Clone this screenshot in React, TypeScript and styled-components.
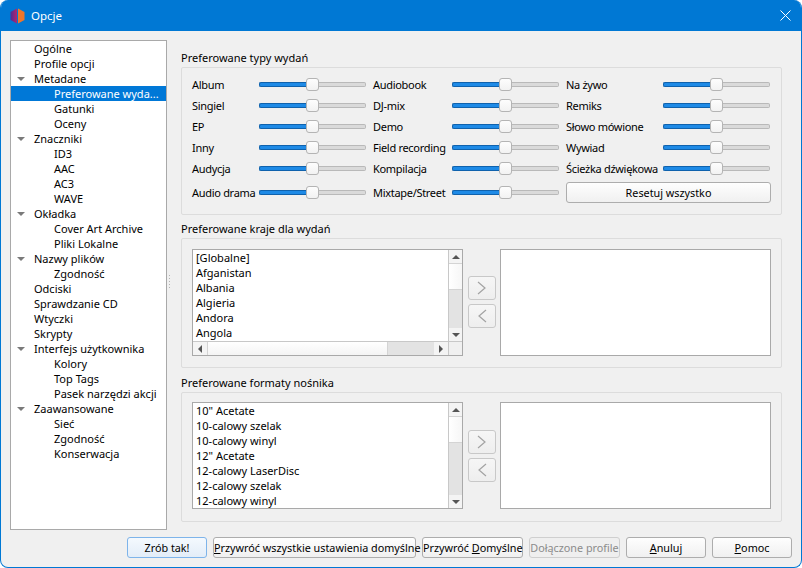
import React from 'react'
import styled, { createGlobalStyle } from 'styled-components'

const Global = createGlobalStyle`
  html, body { margin: 0; padding: 0; background: #fff; }
  body { font-family: "Noto Sans", "Open Sans", sans-serif; font-size: 11px; color: #000; }
  * { box-sizing: border-box; }
`

const Win = styled.div`
  width: 802px; height: 568px; display: flex; flex-direction: column;
  border: 1px solid #0078d4; border-top: 0; border-radius: 8px;
  background: #f0f0f0; overflow: hidden;
`
const TitleBar = styled.div`
  height: 31px; flex: none; background: #0078d4; color: #fff; margin: 0 -1px;
  display: flex; align-items: center; padding: 0 11px 0 10px; gap: 6px; font-size: 11.5px;
`
const TitleText = styled.span`flex: 1;`
const Body = styled.div`
  flex: 1; display: flex; flex-direction: column; padding: 9px; min-height: 0;
`
const Columns = styled.div`display: flex; height: 490px; flex: none;`

const Tree = styled.div`
  width: 157px; flex: none; background: #fff; border: 1px solid #a9a9a9;
  display: flex; flex-direction: column;
`
const TreeRow = styled.div<{ $selected?: boolean }>`
  height: 15px; flex: none; display: flex; align-items: center; line-height: 15px;
  white-space: nowrap; overflow: hidden;
  background: ${p => (p.$selected ? '#0078d7' : 'transparent')};
  color: ${p => (p.$selected ? '#fff' : '#000')};
`
const ArrowSlot = styled.span`
  width: 23px; flex: none; display: flex; padding-left: 6px;
`
const Caret = styled.span`
  width: 0; height: 0; border-left: 4px solid transparent; border-right: 4px solid transparent;
  border-top: 4px solid #7a7a7a;
`
const TreeLabel = styled.span<{ $depth: number }>`
  margin-left: ${p => p.$depth * 20}px;
`

const Splitter = styled.div`
  width: 14px; flex: none; display: flex; flex-direction: column; align-items: flex-start;
  justify-content: center; gap: 2px; padding-left: 2px; padding-bottom: 8px;
`
const SplitDot = styled.span`width: 1px; height: 1px; background: #b4b4b4;`

const Right = styled.div`width: 601px; flex: none; display: flex; flex-direction: column;`
const SectionTitle = styled.div<{ $top: number }>`
  margin-top: ${p => p.$top}px; height: 16px; line-height: 16px; margin-bottom: 1px;
`
const GroupBox = styled.div<{ $height: number; $top: number }>`
  height: ${p => p.$height}px; flex: none; border: 1px solid #dcdcdc; border-radius: 2px;
  padding: ${p => p.$top}px 10px 0 10px;
`
const SliderGrid = styled.div`
  display: grid; grid-template-columns: 67px 107px 86px 107px 104px 107px;
  grid-template-rows: repeat(5, 21px) 27px;
`
const SliderLabel = styled.div<{ $gap?: boolean }>`
  display: flex; align-items: center; white-space: nowrap; letter-spacing: -0.3px;
  margin-left: ${p => (p.$gap ? '7px' : '0')};
`
const SliderCell = styled.div`
  display: flex; align-items: center; padding-bottom: 1px;
`
const Fill = styled.div`
  flex: 1; height: 5px; background: #1e8ae6; border: 1px solid #0f62ad; border-right: 0;
  border-radius: 2px 0 0 2px;
`
const Rest = styled.div`
  flex: 1; height: 5px; background: #dadada; border: 1px solid #b9b9b9; border-left: 0;
  border-radius: 0 2px 2px 0;
`
const Thumb = styled.div`
  width: 13px; height: 13px; flex: none; background: linear-gradient(#fdfdfd, #f2f2f2);
  border: 1px solid #b4b4b4; border-radius: 3px;
`
const Btn = styled.button<{ $width?: number; $default?: boolean }>`
  ${p => (p.$width ? `width: ${p.$width}px;` : '')}
  height: 21px; padding: 0; flex: none; font: inherit; font-size: 10.8px; color: #000; white-space: nowrap;
  border: 1px solid ${p => (p.$default ? '#7eb4ea' : '#adadad')}; border-radius: 3px;
  background: ${p => (p.$default
    ? 'linear-gradient(#f4f9fe, #e3edf8)'
    : 'linear-gradient(#fefefe, #f0f0f0)')};
  &:disabled { color: #8b8b8b; border-color: #cfcfcf; background: #efefef; }
`
const ResetCell = styled.div`
  grid-column: 5 / span 2; display: flex; align-items: center; margin-left: 7px;
`
const ResetBtn = styled(Btn)`width: 205px;`

const Picker = styled.div`display: flex; align-items: stretch; height: 107px;`
const ListFrame = styled.div<{ $hscroll?: boolean }>`
  width: 271px; flex: none; background: #fff; border: 1px solid #a9a9a9;
  display: grid; grid-template-columns: 1fr 14px;
  grid-template-rows: ${p => (p.$hscroll ? '1fr 14px' : '1fr')};
`
const ListItems = styled.div`padding: 0 0 0 3px; overflow: hidden; display: flex; flex-direction: column;`
const ListItem = styled.div`height: 15px; line-height: 15px; flex: none; white-space: nowrap;`
const VBar = styled.div`
  display: flex; flex-direction: column; border-left: 1px solid #c8c8c8;
`
const HBar = styled.div`
  display: flex; border-top: 1px solid #c8c8c8;
`
const Corner = styled.div`
  border-left: 1px solid #c8c8c8; border-top: 1px solid #c8c8c8; background: #f0f0f0;
`
const BarEnd = styled.div<{ $v?: boolean }>`
  flex: none; ${p => (p.$v ? 'height: 13px;' : 'width: 14px;')}
  display: flex; align-items: center; justify-content: center; background: #f4f4f4;
`
const BarHandle = styled.div<{ $v?: boolean; $size: number }>`
  flex: none; ${p => (p.$v ? `height: ${p.$size}px;` : `width: ${p.$size}px;`)}
  background: ${p => (p.$v ? 'linear-gradient(90deg, #fff, #f6f6f6)' : 'linear-gradient(#fff, #f4f4f4)')};
  border-${p => (p.$v ? 'top' : 'left')}: 1px solid #d4d4d4;
  border-${p => (p.$v ? 'bottom' : 'right')}: 1px solid #d4d4d4;
`
const BarTrough = styled.div`flex: 1; background: #e3e3e3;`
const Tri = styled.span<{ $dir: 'up' | 'down' | 'left' | 'right' }>`
  width: 0; height: 0; border-style: solid;
  ${p => p.$dir === 'up' && 'border-width: 0 4px 4px 4px; border-color: transparent transparent #555 transparent;'}
  ${p => p.$dir === 'down' && 'border-width: 4px 4px 0 4px; border-color: #555 transparent transparent transparent;'}
  ${p => p.$dir === 'left' && 'border-width: 4px 4px 4px 0; border-color: transparent #555 transparent transparent;'}
  ${p => p.$dir === 'right' && 'border-width: 4px 0 4px 4px; border-color: transparent transparent transparent #555;'}
`
const MoveCol = styled.div<{ $top: number }>`
  width: 28px; flex: none; margin: ${p => p.$top}px 4px 0 5px;
  display: flex; flex-direction: column; gap: 4px;
`
const MoveBtn = styled.div`
  height: 24px; display: flex; align-items: center; justify-content: center;
  border: 1px solid #c8c8c8; border-radius: 3px; background: linear-gradient(#f6f6f6, #eeeeee);
`
const EmptyList = styled.div`flex: 1; background: #fff; border: 1px solid #a9a9a9;`

const Footer = styled.div`
  display: flex; justify-content: flex-end; gap: 6px; margin-top: 7px;
`

type TreeNode = { label: string; depth: number; open?: boolean; selected?: boolean }

const tree: TreeNode[] = [
  { label: 'Ogólne', depth: 0 },
  { label: 'Profile opcji', depth: 0 },
  { label: 'Metadane', depth: 0, open: true },
  { label: 'Preferowane wyda...', depth: 1, selected: true },
  { label: 'Gatunki', depth: 1 },
  { label: 'Oceny', depth: 1 },
  { label: 'Znaczniki', depth: 0, open: true },
  { label: 'ID3', depth: 1 },
  { label: 'AAC', depth: 1 },
  { label: 'AC3', depth: 1 },
  { label: 'WAVE', depth: 1 },
  { label: 'Okładka', depth: 0, open: true },
  { label: 'Cover Art Archive', depth: 1 },
  { label: 'Pliki Lokalne', depth: 1 },
  { label: 'Nazwy plików', depth: 0, open: true },
  { label: 'Zgodność', depth: 1 },
  { label: 'Odciski', depth: 0 },
  { label: 'Sprawdzanie CD', depth: 0 },
  { label: 'Wtyczki', depth: 0 },
  { label: 'Skrypty', depth: 0 },
  { label: 'Interfejs użytkownika', depth: 0, open: true },
  { label: 'Kolory', depth: 1 },
  { label: 'Top Tags', depth: 1 },
  { label: 'Pasek narzędzi akcji', depth: 1 },
  { label: 'Zaawansowane', depth: 0, open: true },
  { label: 'Sieć', depth: 1 },
  { label: 'Zgodność', depth: 1 },
  { label: 'Konserwacja', depth: 1 },
]

const sliderRows = [
  ['Album', 'Audiobook', 'Na żywo'],
  ['Singiel', 'DJ-mix', 'Remiks'],
  ['EP', 'Demo', 'Słowo mówione'],
  ['Inny', 'Field recording', 'Wywiad'],
  ['Audycja', 'Kompilacja', 'Ścieżka dźwiękowa'],
  ['Audio drama', 'Mixtape/Street'],
]

const countries = ['[Globalne]', 'Afganistan', 'Albania', 'Algieria', 'Andora', 'Angola']
const formats = ['10" Acetate', '10-calowy szelak', '10-calowy winyl', '12" Acetate', '12-calowy LaserDisc', '12-calowy szelak', '12-calowy winyl']

function Slider() {
  return (
    <SliderCell>
      <Fill />
      <Thumb />
      <Rest />
    </SliderCell>
  )
}

function Chevron({ left }: { left?: boolean }) {
  return (
    <svg width="10" height="14" viewBox="0 0 10 14" fill="none" stroke="#a3a3a3" strokeWidth="1.2">
      <path d={left ? 'M9 1 L2 7 L9 13' : 'M1 1 L8 7 L1 13'} />
    </svg>
  )
}

function Logo() {
  return (
    <svg width="15" height="16" viewBox="0 0 15 16">
      <defs>
        <linearGradient id="lg" x1="0" x2="1" y1="0" y2="0">
          <stop offset="0" stopColor="#4f2d94" />
          <stop offset="1" stopColor="#b4246f" />
        </linearGradient>
      </defs>
      <path d="M7 0.5 L0.5 4 L0.5 12 L7 15.5 Z" fill="url(#lg)" />
      <path d="M8 0.5 L14.5 4 L14.5 12 L8 15.5 Z" fill="#f0762b" />
    </svg>
  )
}

function Picklist({ items, hscroll, handle, moveTop }: { items: string[]; hscroll?: boolean; handle: number; moveTop: number }) {
  return (
    <Picker>
      <ListFrame $hscroll={hscroll}>
        <ListItems>
          {items.map(i => <ListItem key={i}>{i}</ListItem>)}
        </ListItems>
        <VBar>
          <BarEnd $v><Tri $dir="up" /></BarEnd>
          <BarHandle $v $size={handle} />
          <BarTrough />
          <BarEnd $v><Tri $dir="down" /></BarEnd>
        </VBar>
        {hscroll && (
          <HBar>
            <BarEnd><Tri $dir="left" /></BarEnd>
            <BarHandle $size={181} />
            <BarTrough />
            <BarEnd><Tri $dir="right" /></BarEnd>
          </HBar>
        )}
        {hscroll && <Corner />}
      </ListFrame>
      <MoveCol $top={moveTop}>
        <MoveBtn><Chevron /></MoveBtn>
        <MoveBtn><Chevron left /></MoveBtn>
      </MoveCol>
      <EmptyList />
    </Picker>
  )
}

export default function App() {
  return (
    <Win>
      <Global />
      <TitleBar>
        <Logo />
        <TitleText>Opcje</TitleText>
        <svg width="11" height="11" viewBox="0 0 11 11" stroke="#fff" strokeWidth="1">
          <path d="M0.5 0.5 L10.5 10.5 M10.5 0.5 L0.5 10.5" />
        </svg>
      </TitleBar>
      <Body>
        <Columns>
          <Tree>
            {tree.map(n => (
              <TreeRow key={n.label + n.depth + (n.open ? 'o' : '')} $selected={n.selected}>
                <ArrowSlot>{n.open && <Caret />}</ArrowSlot>
                <TreeLabel $depth={n.depth}>{n.label}</TreeLabel>
              </TreeRow>
            ))}
          </Tree>
          <Splitter>
            {[0, 1, 2, 3, 4].map(i => <SplitDot key={i} />)}
          </Splitter>
          <Right>
            <SectionTitle $top={10}>Preferowane typy wydań</SectionTitle>
            <GroupBox $height={148} $top={6}>
              <SliderGrid>
                {sliderRows.map(row => row.map((label, c) => (
                  <React.Fragment key={label}>
                    <SliderLabel $gap={c > 0}>{label}</SliderLabel>
                    <Slider />
                  </React.Fragment>
                )))}
                <ResetCell><ResetBtn>Resetuj wszystko</ResetBtn></ResetCell>
              </SliderGrid>
            </GroupBox>
            <SectionTitle $top={6}>Preferowane kraje dla wydań</SectionTitle>
            <GroupBox $height={130} $top={10}>
              <Picklist items={countries} hscroll handle={27} moveTop={27} />
            </GroupBox>
            <SectionTitle $top={7}>Preferowane formaty nośnika</SectionTitle>
            <GroupBox $height={130} $top={9}>
              <Picklist items={formats} handle={27} moveTop={28} />
            </GroupBox>
          </Right>
        </Columns>
        <Footer>
          <Btn $width={80} $default>Zrób tak!</Btn>
          <Btn $width={203}><u>P</u>rzywróć wszystkie ustawienia domyślne</Btn>
          <Btn $width={101}>Przywróć <u>D</u>omyślne</Btn>
          <Btn $width={91} disabled>Dołączone profile</Btn>
          <Btn $width={80}><u>A</u>nuluj</Btn>
          <Btn $width={80}><u>P</u>omoc</Btn>
        </Footer>
      </Body>
    </Win>
  )
}
